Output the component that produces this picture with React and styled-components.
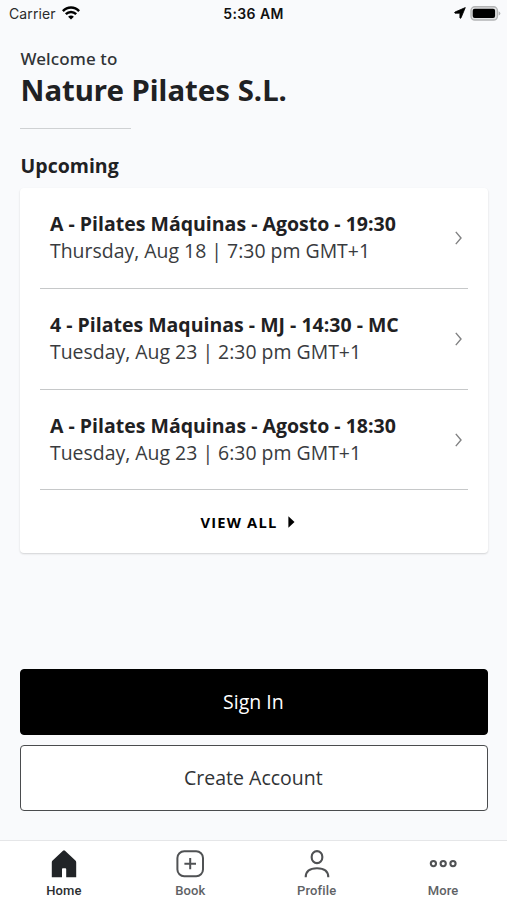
import React from "react";
import styled, { createGlobalStyle } from "styled-components";

const classes = [
  {
    name: "A - Pilates Máquinas - Agosto - 19:30",
    time: "Thursday, Aug 18 | 7:30 pm GMT+1",
  },
  {
    name: "4 - Pilates Maquinas - MJ - 14:30 - MC",
    time: "Tuesday, Aug 23 | 2:30 pm GMT+1",
  },
  {
    name: "A - Pilates Máquinas - Agosto - 18:30",
    time: "Tuesday, Aug 23 | 6:30 pm GMT+1",
  },
];

const WifiIcon = () => (
  <svg width="18" height="14" viewBox="0 0 18 14" fill="none" stroke="#000">
    <path d="M0.9 5.1C5.5 0.2 12.5 0.2 17.1 5.1" strokeWidth="2.5" />
    <path d="M3.8 8.2C6.8 5.2 11.2 5.2 14.2 8.2" strokeWidth="2.4" />
    <path d="M9 13.6L6.1 10.7C7.8 9.2 10.2 9.2 11.9 10.7Z" fill="#000" stroke="none" />
  </svg>
);

const LocationIcon = () => (
  <svg width="12" height="12" viewBox="0 0 12 12">
    <path
      d="M11.3 0.6L7 10.9Q6.3 11.7 5.9 10.9V6.2H1Q0.2 5.6 1 5Z"
      fill="#000"
      stroke="#000"
      strokeWidth="0.8"
      strokeLinejoin="round"
    />
  </svg>
);

const BatteryIcon = () => (
  <svg width="31" height="15" viewBox="0 0 31 15">
    <rect x="1" y="0.8" width="26.4" height="13.2" rx="3.8" fill="#e2e3e4" stroke="#b3b4b5" strokeWidth="1.4" />
    <rect x="2.7" y="2.7" width="22.4" height="9.4" rx="2" fill="#000" />
    <path d="M28.6 5.2Q30.4 6 30.4 7.4T28.6 9.6Z" fill="#b3b4b5" />
  </svg>
);

const ChevronIcon = () => (
  <svg width="8" height="14" viewBox="0 0 8 14" fill="none" stroke="#808182" strokeWidth="1.4">
    <path d="M0.8 0.9L6 7L0.8 13.1" />
  </svg>
);

const ArrowIcon = () => (
  <svg width="7" height="12" viewBox="0 0 7 12">
    <path d="M0.4 0.3L6.5 6L0.4 11.7Z" fill="#000" />
  </svg>
);

const HomeIcon = () => (
  <svg width="28" height="28" viewBox="0 0 28 28">
    <path
      d="M14 0.2Q14.5 0.2 15 0.7L25.4 10.5Q26.2 11.3 26.2 12.4V27.2H16.2V19.2Q16.2 18.3 15.4 18.3H12.8Q12 18.3 12 19.2V27.2H1.8V12.4Q1.8 11.3 2.6 10.5L13 0.7Q13.5 0.2 14 0.2Z"
      fill="#212427"
    />
  </svg>
);

const BookIcon = () => (
  <svg width="28" height="28" viewBox="0 0 28 28" fill="none" stroke="#505254" strokeWidth="2">
    <rect x="1.4" y="1.2" width="25.6" height="25" rx="6.8" />
    <path d="M14.2 8.1V19.3M8.4 13.7H20" />
  </svg>
);

const ProfileIcon = () => (
  <svg width="28" height="28" viewBox="0 0 28 28" fill="none" stroke="#505254" strokeWidth="2.1">
    <rect x="8.7" y="1.1" width="10.6" height="12" rx="5.3" />
    <path d="M2.7 27.2C2.7 21.2 6.6 18.2 14 18.2S25.3 21.2 25.3 27.2" />
  </svg>
);

const MoreIcon = () => (
  <svg width="28" height="28" viewBox="0 0 28 28" fill="none" stroke="#505254" strokeWidth="2.1">
    <circle cx="4.4" cy="13.6" r="2.6" />
    <circle cx="14.2" cy="13.6" r="2.6" />
    <circle cx="24" cy="13.6" r="2.6" />
  </svg>
);

const tabs = [
  { label: "Home", icon: <HomeIcon />, active: true },
  { label: "Book", icon: <BookIcon /> },
  { label: "Profile", icon: <ProfileIcon /> },
  { label: "More", icon: <MoreIcon /> },
];

const App = () => {
  return (
    <Screen>
      <GlobalStyle />
      <StatusBar>
        <StatusLeft>
          Carrier
          <WifiIcon />
        </StatusLeft>
        <Clock>5:36 AM</Clock>
        <StatusRight>
          <LocationIcon />
          <BatteryIcon />
        </StatusRight>
      </StatusBar>

      <Content>
        <Welcome>Welcome to</Welcome>
        <StudioName>Nature Pilates S.L.</StudioName>
        <Divider />
        <SectionTitle>Upcoming</SectionTitle>
        <Card>
          {classes.map((item) => (
            <ClassRow key={item.name}>
              <ClassInfo>
                <ClassName>{item.name}</ClassName>
                <ClassTime>{item.time}</ClassTime>
              </ClassInfo>
              <ChevronIcon />
            </ClassRow>
          ))}
          <ViewAll>
            VIEW ALL
            <ArrowIcon />
          </ViewAll>
        </Card>
        <Actions>
          <Button $primary>Sign In</Button>
          <Button>Create Account</Button>
        </Actions>
      </Content>

      <TabBar>
        {tabs.map((tab) => (
          <Tab key={tab.label} $active={tab.active}>
            {tab.icon}
            <span>{tab.label}</span>
          </Tab>
        ))}
      </TabBar>
    </Screen>
  );
};

export default App;

const GlobalStyle = createGlobalStyle`
  * {
    box-sizing: border-box;
  }

  body {
    margin: 0;
    background: #f9fafc;
  }

  svg {
    display: block;
    flex: none;
  }
`;

const Screen = styled.div`
  display: flex;
  flex-direction: column;
  height: 900px;
  overflow: hidden;
  background: #f9fafc;
  color: #1f2123;
  font-family: "Open Sans", "Noto Sans", sans-serif;
  white-space: nowrap;
`;

const StatusBar = styled.header`
  display: grid;
  grid-template-columns: 1fr auto 1fr;
  align-items: center;
  height: 26px;
  padding: 0 6px 0 9px;
  font-family: Inter, "Liberation Sans", sans-serif;
  font-size: 14px;
  color: #2b2b2b;
`;

const StatusLeft = styled.div`
  display: flex;
  align-items: center;
  gap: 6px;
  letter-spacing: 0.1px;
`;

const Clock = styled.div`
  padding-right: 3px;
  font-weight: 600;
  letter-spacing: 0.4px;
  color: #111;
`;

const StatusRight = styled.div`
  display: flex;
  align-items: center;
  justify-content: flex-end;
  gap: 4px;
`;

const Content = styled.main`
  flex: 1;
  display: flex;
  flex-direction: column;
  padding: 21.4px 19.4px 29px 20.2px;
`;

const Welcome = styled.div`
  padding-left: 0.3px;
  font-family: "Noto Sans", sans-serif;
  font-size: 17px;
  font-weight: 500;
  line-height: 24px;
  letter-spacing: 0.1px;
  color: #303336;
`;

const StudioName = styled.h1`
  margin: 0;
  padding-left: 0.3px;
  font-family: "Noto Sans", sans-serif;
  font-size: 29.4px;
  font-weight: 700;
  line-height: 38px;
`;

const Divider = styled.div`
  width: 110.6px;
  height: 1px;
  margin: 19px 0 22px;
  background: #cfd1d3;
`;

const SectionTitle = styled.h2`
  margin: 0 0 7px;
  padding-left: 0.4px;
  font-size: 19.5px;
  font-weight: 700;
  line-height: 30px;
`;

const Card = styled.section`
  height: 365px;
  padding: 0 20px;
  background: #fff;
  border-radius: 4px;
  box-shadow: 0 1px 2px rgba(0, 0, 0, 0.16);
`;

const ClassRow = styled.div`
  display: flex;
  align-items: center;
  justify-content: space-between;
  height: 100.7px;
  padding: 0 5px 0 9.8px;
  border-bottom: 1px solid #c6c8c9;
`;

const ClassInfo = styled.div`
  padding-bottom: 2px;
`;

const ClassName = styled.div`
  font-size: 19.5px;
  font-weight: 700;
  line-height: 27px;
`;

const ClassTime = styled.div`
  font-size: 19.45px;
  line-height: 27px;
  color: #393b3e;
`;

const ViewAll = styled.div`
  display: flex;
  align-items: center;
  justify-content: center;
  gap: 11px;
  height: 63px;
  padding-right: 12px;
  font-size: 14.7px;
  font-weight: 700;
  letter-spacing: 1.2px;
  color: #000;
`;

const Actions = styled.div`
  display: flex;
  flex-direction: column;
  gap: 10px;
  margin-top: auto;
`;

const Button = styled.button`
  height: 66px;
  padding: 0 1px 0 0;
  border: 1px solid ${(props) => (props.$primary ? "#000" : "#4a4c4e")};
  border-radius: 4px;
  background: ${(props) => (props.$primary ? "#000" : "#fff")};
  color: ${(props) => (props.$primary ? "#fff" : "#303336")};
  font-family: inherit;
  font-size: 19.5px;
  line-height: 26px;
`;

const TabBar = styled.nav`
  display: grid;
  grid-template-columns: repeat(4, 126.4px);
  justify-content: center;
  height: 60px;
  padding-top: 9px;
  border-top: 1px solid #e5e6e8;
  background: #fff;
`;

const Tab = styled.div`
  display: flex;
  flex-direction: column;
  align-items: center;
  gap: 5px;
  font-family: Roboto, sans-serif;
  font-size: 13px;
  font-weight: 500;
  line-height: 16px;
  letter-spacing: 0.15px;
  color: ${(props) => (props.$active ? "#2b2e31" : "#606265")};
`;
